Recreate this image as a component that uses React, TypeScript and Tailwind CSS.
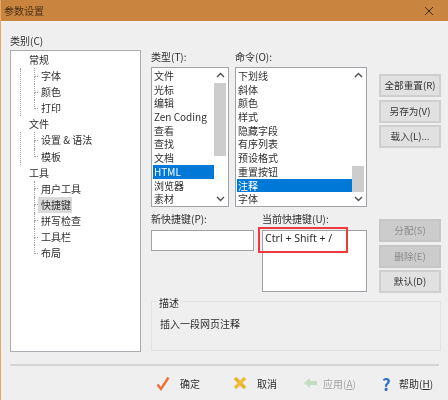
import type { ReactNode } from "react"

function Connector({ last }: { last?: boolean }) {
  return (
    <div className="flex flex-col w-[4px] self-stretch shrink-0">
      <div className="flex-1 border-l border-b border-dotted border-[#a0a0a0]" />
      <div className={`flex-1 border-l border-dotted ${last ? "border-transparent" : "border-[#a0a0a0]"}`} />
    </div>
  )
}

function TreeChild({ label, last, selected }: { label: string; last?: boolean; selected?: boolean }) {
  return (
    <div className="flex items-stretch h-[16.1px] ml-[13px]">
      <Connector last={last} />
      <span className={`leading-[16px] pl-[3px] pr-[1px] ${selected ? "bg-[#d9d9d9]" : ""}`}>{label}</span>
    </div>
  )
}

function TreeGroup({ label, items, line, selected }: { label: string; items: string[]; line?: boolean; selected?: string }) {
  return (
    <div>
      <div className="h-[16.1px] leading-[16px] pl-[18px]">{label}</div>
      <div className={`ml-[9px] border-l border-dotted ${line ? "border-[#a0a0a0]" : "border-transparent"}`}>
        {items.map((item, i) => (
          <TreeChild key={item} label={item} last={i === items.length - 1} selected={item === selected} />
        ))}
      </div>
    </div>
  )
}

function Scrollbar({ thumbTop, thumbHeight }: { thumbTop: number; thumbHeight: number }) {
  return (
    <div className="w-[14px] flex flex-col items-center justify-between py-[4px] pr-[2px] text-[#505050]">
      <svg width="9" height="6" viewBox="0 0 9 6" fill="none" stroke="currentColor" strokeWidth="1.4"><path d="M1 5l3.5-3.5L8 5" /></svg>
      <div className="flex-1 w-full my-[3px]">
        <div className="bg-[#cdcdcd] w-full" style={{ marginTop: thumbTop, height: thumbHeight }} />
      </div>
      <svg width="9" height="6" viewBox="0 0 9 6" fill="none" stroke="currentColor" strokeWidth="1.4"><path d="M1 1l3.5 3.5L8 1" /></svg>
    </div>
  )
}

function ListBox({ items, selected, className, thumbTop, thumbHeight }: { items: string[]; selected: string; className: string; thumbTop: number; thumbHeight: number }) {
  return (
    <div className={`flex h-[140px] border border-[#9fa3a8] bg-white pl-[1px] ${className}`}>
      <div className="flex-1 pt-[1px]">
        {items.map((item) => (
          <div key={item} className={`h-[13.7px] leading-[14px] pl-[1px] ${item === selected ? "bg-[#0078d7] text-white" : ""}`}>{item}</div>
        ))}
      </div>
      <Scrollbar thumbTop={thumbTop} thumbHeight={thumbHeight} />
    </div>
  )
}

function SideButton({ label, disabled }: { label: string; disabled?: boolean }) {
  return (
    <button className={`w-[62px] h-[23px] border-2 text-center text-[9.6px] ${disabled ? "bg-[#cccccc] border-[#c6c6c6] text-[#8a8a8a]" : "bg-[#e1e1e1] border-[#cfcfcf] text-[#333333]"}`}>
      {label}
    </button>
  )
}

function FooterAction({ icon, label, width, muted }: { icon: ReactNode; label: ReactNode; width: string; muted?: boolean }) {
  return (
    <div className={`flex items-center ${width} ${muted ? "text-[#a5a5a5]" : ""}`}>
      {icon}
      <span>{label}</span>
    </div>
  )
}

export default function App() {
  return (
    <div className="w-[448px] h-[400px] overflow-hidden bg-[#efefef] text-[#2e2e2e] text-[10px] flex flex-col border-l border-[#e6a76a] blur-[0.4px]" style={{ fontFamily: '"Noto Sans CJK SC", "Noto Sans", sans-serif' }}>
      {/* Title bar */}
      <div className="h-[21px] -ml-px bg-[#c9853f] flex items-center justify-between pl-[4px] pr-[14px] text-[#4a3015] shrink-0">
        <span>参数设置</span>
        <svg width="10" height="10" viewBox="0 0 10 10" stroke="#3a2a18" strokeWidth="1"><path d="M1 1l8 8M9 1l-8 8" /></svg>
      </div>

      <div className="flex pl-[9px] pt-[13px] gap-[10px]">
        {/* Category tree */}
        <div className="w-[131px]">
          <div className="h-[16px] leading-[14px]">类别(C)</div>
          <div className="h-[302px] border border-[#a9adb2] bg-white pt-[1px]">
            <TreeGroup label="常规" items={["字体", "颜色", "打印"]} line />
            <TreeGroup label="文件" items={["设置 & 语法", "模板"]} line />
            <TreeGroup label="工具" items={["用户工具", "快捷键", "拼写检查", "工具栏", "布局"]} selected="快捷键" />
          </div>
        </div>

        <div className="w-[290px] pt-[16px]">
          <div className="flex">
            <div className="w-[78px]">
              <div className="h-[17px] leading-[14px]">类型(T):</div>
              <ListBox className="w-[78px]" thumbTop={2} thumbHeight={73} selected="HTML" items={["文件", "光标", "编辑", "Zen Coding", "查看", "查找", "文档", "HTML", "浏览器", "素材"]} />
            </div>
            <div className="w-[132px] ml-[6px]">
              <div className="h-[17px] leading-[14px]">命令(O):</div>
              <ListBox className="w-[132px]" thumbTop={85} thumbHeight={26} selected="注释" items={["下划线", "斜体", "颜色", "样式", "隐藏字段", "有序列表", "预设格式", "重置按钮", "注释", "字体"]} />
            </div>
            <div className="ml-[12px] pt-[24px] flex flex-col gap-[2.5px]">
              <SideButton label="全部重置(R)" />
              <SideButton label="另存为(V)" />
              <SideButton label="载入(L)..." />
            </div>
          </div>

          <div className="flex mt-[5px]">
            <div className="w-[103px]">
              <div className="h-[18px] leading-[14px]">新快捷键(P):</div>
              <div className="h-[21px] border border-[#9fa3a8] bg-white" />
            </div>
            <div className="w-[105px] ml-[8px] relative">
              <div className="h-[18px] leading-[14px]">当前快捷键(U):</div>
              <div className="h-[62px] border border-[#9fa3a8] bg-white pl-[2px] text-[10.6px] leading-[14px]" style={{ fontFamily: '"Noto Sans", "Noto Sans CJK SC", sans-serif' }}>Ctrl + Shift + /</div>
              <div className="absolute left-[-4px] top-[15px] w-[90px] h-[26px] border-2 border-[#ee3a3f]" />
            </div>
            <div className="ml-[12px] mt-[7px] flex flex-col gap-[2.5px]">
              <SideButton label="分配(S)" disabled />
              <SideButton label="删除(E)" disabled />
              <SideButton label="默认(D)" />
            </div>
          </div>

          {/* Description group */}
          <div className="relative mt-[8px] h-[50px] w-[290px] border border-[#e2e2e2] pl-[8px] pt-[14px]">
            <span className="absolute left-[6px] -top-[5px] bg-[#efefef] px-[1px] leading-[12px]">描述</span>
            <span className="leading-[14px]">插入一段网页注释</span>
          </div>
        </div>
      </div>

      <div className="ml-[9px] w-[429px] mt-[12px] h-[2px] bg-[#d5d5d5] shrink-0" />

      {/* Footer actions */}
      <div className="flex items-center pl-[155px] mt-[8px] h-[18px]">
        <FooterAction
          width="w-[77px]"
          label="确定"
          icon={
            <svg className="mr-[10px]" width="14" height="15" viewBox="0 0 14 15" fill="none" stroke="#ee7038" strokeWidth="2.4"><path d="M1.5 8.5l3.5 4.5L12.5 1.5" /></svg>
          }
        />
        <FooterAction
          width="w-[71px]"
          label="取消"
          icon={
            <svg className="mr-[10px]" width="14" height="14" viewBox="0 0 14 14" fill="none" strokeWidth="3.4"><path d="M2 2l10 10" stroke="#e9b12c" /><path d="M12 2L2 12" stroke="#f0bd3a" /></svg>
          }
        />
        <FooterAction
          width="w-[78px]"
          muted
          label={<>应用(<u>A</u>)</>}
          icon={
            <svg className="mr-[6px]" width="13" height="12" viewBox="0 0 13 12" fill="#c3dcc3"><path d="M0 6l6-5v3h7v4H6v3z" /></svg>
          }
        />
        <FooterAction
          width="w-[60px]"
          label={<>帮助(<u>H</u>)</>}
          icon={<span className="w-[13px] mr-[4px] text-[17px] leading-none font-bold text-[#2f6fc9]">?</span>}
        />
      </div>
    </div>
  )
}
